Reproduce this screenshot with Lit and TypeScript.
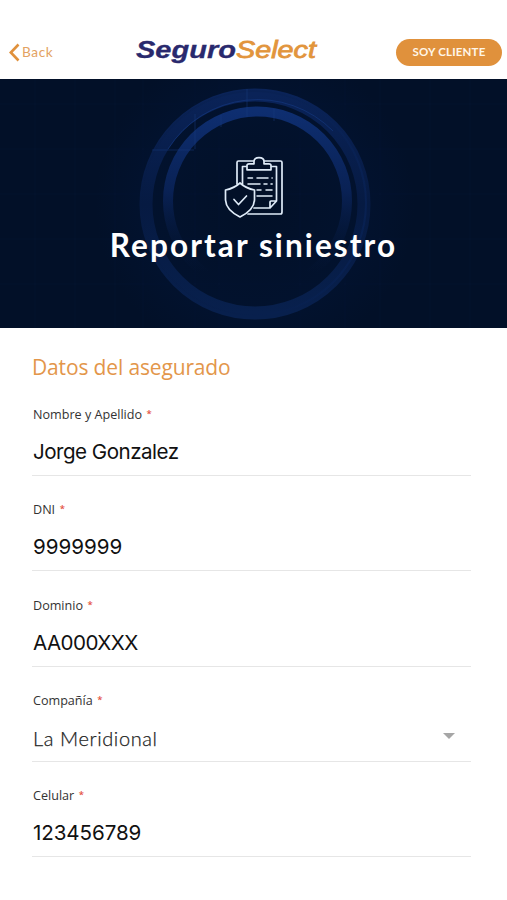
import { LitElement, html, css } from "lit";
import { customElement, property } from "lit/decorators.js";
import { styleMap } from "lit/directives/style-map.js";

@customElement("form-field")
class FormField extends LitElement {
  @property() label = "";
  @property() value = "";
  @property({ type: Number }) tracking = 0;
  @property({ type: Boolean }) select = false;

  static styles = css`
    :host { display: block; height: 95.3px; box-sizing: border-box; }
    .label { height: 18px; padding-left: 1px; font: 12.6px/18px "Open Sans", sans-serif; color: #333; white-space: pre; }
    .star { color: #e4503e; font-size: 9.5px; font-weight: 600; margin-left: 4.5px; vertical-align: 2px; line-height: 1; }
    .box { display: flex; align-items: center; justify-content: space-between; height: 52px; border-bottom: 1px solid #e6e6e6; padding: 0 16px 0 1px; box-sizing: border-box; }
    .value { font: 20.6px/26px Inter, sans-serif; color: #111; margin-top: 5px; white-space: nowrap; }
    .picked { font: 300 20px/26px Lato, sans-serif; color: #222; margin-top: 6px; letter-spacing: 0.6px; -webkit-text-stroke: 0.25px #222; }
    .arrow { width: 12px; height: 6px; display: block; margin-top: 2px; }
  `;

  render() {
    return html`
      <div class="label">${this.label}<span class="star">*</span></div>
      <div class="box">
        <span class=${this.select ? "picked" : "value"} style=${styleMap(this.tracking ? { letterSpacing: `${this.tracking}px` } : {})}>${this.value}</span>
        ${this.select ? html`<svg class="arrow" viewBox="0 0 12 6"><path d="M0 0H12L6 6Z" fill="#a6a6a6" /></svg>` : null}
      </div>`;
  }
}

@customElement("app-root")
class AppRoot extends LitElement {
  static styles = css`
    :host { display: block; height: 900px; background: #fff; overflow: hidden; }
    .bar { height: 79px; box-sizing: border-box; padding: 25px 5px 0 9px; display: grid; grid-template-columns: 126px 186px 1fr; align-items: center; }
    .back { display: flex; align-items: center; gap: 2px; color: #e3a262; font: 13.6px/18px Lato, sans-serif; letter-spacing: 0.6px; }
    .chevron { width: 11px; height: 19px; }
    .logo { width: 186px; height: 34px; display: block; margin-top: -2px; }
    .seguro { font: italic bold 23px "Liberation Sans", sans-serif; fill: #29296d; stroke: #29296d; stroke-width: 0.3px; }
    .select { font: italic 23px "Liberation Sans", sans-serif; fill: #e2953c; stroke: #e2953c; stroke-width: 0.8px; }
    .client { justify-self: end; width: 106px; height: 27px; border-radius: 14px; background: #e0913c; color: #fff6e8; font: bold 11.5px/26px Lato, sans-serif; letter-spacing: 0.2px; text-align: center; }
    .hero { height: 249px; display: grid; background: #021028; }
    .hero > * { grid-area: 1 / 1; }
    .rings { width: 507px; height: 249px; display: block; }
    .content { display: flex; flex-direction: column; align-items: center; padding-top: 77px; }
    .clip { width: 60px; height: 62px; display: block; }
    .title { margin: 8px 0 0; font: 700 31.5px/38px Lato, sans-serif; color: #fff; letter-spacing: 2.1px; white-space: nowrap; }
    .form { padding: 24px 36px 0 32px; }
    .heading { margin: 0 0 24px; font: 400 21px/30px "Open Sans", sans-serif; color: #e3964a; letter-spacing: -0.15px; }
  `;

  render() {
    return html`
      <header class="bar">
        <div class="back">
          <svg class="chevron" viewBox="0 0 11 19"><path d="M9.5 1.5L1.8 9.5L9.5 17.5" fill="none" stroke="#e0913c" stroke-width="2.6" /></svg>
          <span>Back</span>
        </div>
        <svg class="logo" viewBox="0 0 186 34">
          <text class="seguro" x="1" y="24" textLength="100" lengthAdjust="spacingAndGlyphs">Seguro</text>
          <text class="select" x="101" y="24" textLength="80" lengthAdjust="spacingAndGlyphs">Select</text>
        </svg>
        <div class="client">SOY CLIENTE</div>
      </header>
      <section class="hero">
        <svg class="rings" viewBox="0 0 507 249">
          <defs>
            <radialGradient id="glow"><stop offset="0" stop-color="#021027" /><stop offset="0.7" stop-color="#02122e" /><stop offset="1" stop-color="#021028" /></radialGradient>
            <linearGradient id="outer" x1="0" y1="0" x2="0" y2="1"><stop offset="0" stop-color="#0a2358" /><stop offset="0.5" stop-color="#061a42" /><stop offset="1" stop-color="#08204d" /></linearGradient>
            <linearGradient id="inner" x1="0" y1="0" x2="0" y2="1"><stop offset="0" stop-color="#0e2e70" /><stop offset="0.45" stop-color="#092154" /><stop offset="0.7" stop-color="#061a40" stop-opacity="0.5" /><stop offset="0.9" stop-color="#061a40" stop-opacity="0" /></linearGradient>
            <linearGradient id="side"><stop offset="0" stop-color="#061a40" stop-opacity="0.25" /><stop offset="1" stop-color="#09245a" /></linearGradient>
          </defs>
          <circle cx="255" cy="125" r="160" fill="url(#glow)" />
          <path d="M35 0V249M75 0V249M115 0V249M143 0V249M195 0V249M219 0V249M300 0V249M345 0V249M380 0V249M430 0V249M470 0V249M0 25H507M0 70H507M0 115H507M0 160H507M0 205H507" stroke="#0a1c3c" stroke-width="0.6" opacity="0.45" />
          <circle cx="255" cy="125" r="109" fill="none" stroke="url(#outer)" stroke-width="13" />
          <circle cx="254" cy="124" r="112" fill="none" stroke="url(#side)" stroke-width="2" opacity="0.6" />
          <circle cx="257.5" cy="122" r="89.5" fill="none" stroke="url(#inner)" stroke-width="10" />
          <path d="M168 70A106 106 0 0 1 333 52" fill="none" stroke="#153b83" stroke-width="1" opacity="0.6" />
          <path d="M247 10V38M274 30V42M152 71H194M195 35V70M221 36V48" stroke="#1b3d82" stroke-width="0.8" opacity="0.6" />
        </svg>
        <div class="content">
          <svg class="clip" viewBox="0 0 60 62" fill="none" stroke="#dfebf8" stroke-width="1.7" stroke-linejoin="round" stroke-linecap="round">
            <path d="M29.500 5H14.500Q13 5 13 6.500V28M40.500 5H56.500Q58 5 58 6.500V56Q58 58 56.500 58H24" />
            <path d="M24 10.500H18.500V28M47 10.500H52.500V45L46 52H30M46 52V46Q46 45 47 45H52" />
            <path d="M23 13.800V9.500Q23 7.800 25 7.800H30V5.500Q30 1.700 35 1.700T40 5.500V7.800H45Q47 7.800 47 9.500V13.800Z" fill="#021028" />
            <path d="M24 22H28.500M33 22H44M48 22H48.200M24 28H36M40 28H43M47 28H48.200M33 34H37M42 34H48M33 40H48" stroke-width="1.500" />
            <path d="M16 27Q22 32.500 30.500 34V44Q30 54 16 61Q2 54 1.500 44V34Q10 32.500 16 27Z" fill="#021028" />
            <path d="M10 43.500L14.500 48.500L22.500 40" />
          </svg>
          <h1 class="title">Reportar siniestro</h1>
        </div>
      </section>
      <main class="form">
        <h2 class="heading">Datos del asegurado</h2>
        <form-field label="Nombre y Apellido" value="Jorge Gonzalez" tracking="-0.52"></form-field>
        <form-field label="DNI" value="9999999"></form-field>
        <form-field label="Dominio" value="AA000XXX" tracking="-0.55"></form-field>
        <form-field label="Compañía" value="La Meridional" select></form-field>
        <form-field label="Celular" value="123456789" tracking="-0.1"></form-field>
      </main>`;
  }
}
